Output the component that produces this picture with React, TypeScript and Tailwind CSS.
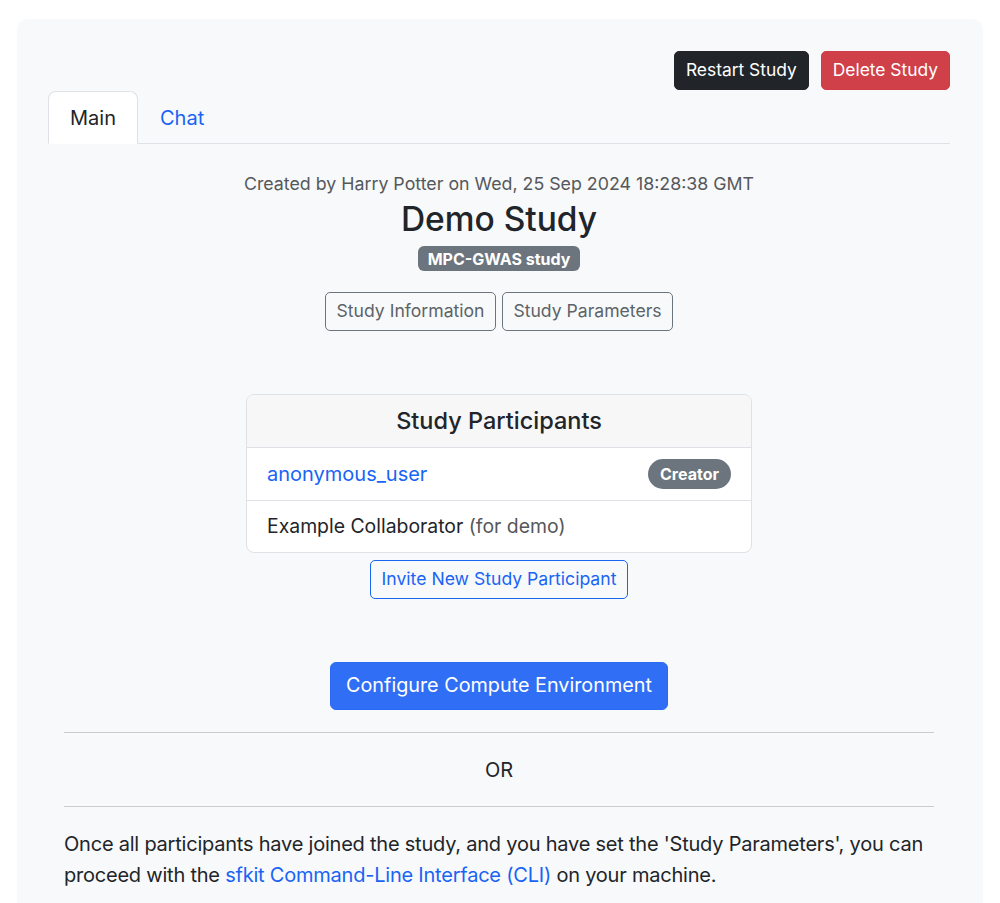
import React from "react";

export default function App() {
  return (
    <div className="min-h-[903px] bg-white pt-[19px] px-[17px] text-[#212529]" style={{ fontFamily: "Inter, 'Noto Sans', sans-serif" }}>
      <div className="rounded-[10px] bg-[#f8f9fa] pl-[31px] pr-[33px] pt-[32px] pb-[40px]">
        <div className="flex justify-end gap-[12px]">
          <button className="h-[39px] rounded-[5px] border border-[#212529] bg-[#212529] px-[11px] text-[17.4px] text-white">Restart Study</button>
          <button className="h-[39px] rounded-[5px] border border-[#cf3e48] bg-[#cf4049] px-[11px] text-[17.4px] text-white">Delete Study</button>
        </div>
        <div className="mt-[1px] flex h-[53px] border-b border-[#dee2e6]">
          <div className="-mb-px flex h-[53px] items-center rounded-t-[8px] border border-b-white border-[#dee2e6] bg-white px-[21px] text-[20px]">Main</div>
          <div className="flex h-[53px] items-center px-[22px] text-[20px] text-[#1864f5]">Chat</div>
        </div>

        <div className="flex flex-col items-center">
          <div className="mt-[26px] text-[17.8px] leading-[27px] text-[#55585b]">Created by Harry Potter on Wed, 25 Sep 2024 18:28:38 GMT</div>
          <div className="mt-px text-[33.5px] leading-[42px] font-medium">Demo Study</div>
          <span className="mt-[6px] flex h-[25px] items-center rounded-[6px] bg-[#6c757d] px-[10px] text-[16px] font-bold text-white">MPC-GWAS study</span>
          <div className="mt-[21px] flex gap-[6px]">
            <button className="h-[39px] w-[171px] rounded-[5px] border border-[#6c757d] text-[17.6px] text-[#5c6369]">Study Information</button>
            <button className="h-[39px] w-[171px] rounded-[5px] border border-[#6c757d] text-[17.6px] text-[#5c6369]">Study Parameters</button>
          </div>

          <div className="mt-[63px] w-[506px] overflow-hidden rounded-[8px] border border-[#dee2e6] bg-white">
            <div className="flex h-[53px] items-center justify-center border-b border-[#dee2e6] bg-[#f7f7f8] text-[23.5px] font-medium">Study Participants</div>
            <div className="flex h-[53px] items-center justify-between border-b border-[#dee2e6] px-[20px]">
              <span className="text-[20px] text-[#1864f5]">anonymous_user</span>
              <span className="flex h-[30px] items-center rounded-full bg-[#6c757d] px-[12px] text-[16px] font-bold text-white">Creator</span>
            </div>
            <div className="flex h-[51px] items-center px-[20px] text-[19.4px]">
              Example Collaborator&nbsp;<span className="text-[#55585b]">(for demo)</span>
            </div>
          </div>

          <button className="mt-[7px] h-[39px] rounded-[5px] border border-[#1864f5] px-[11px] text-[17.6px] text-[#1864f5]">Invite New Study Participant</button>

          <button className="mt-[63px] h-[48px] rounded-[6px] border border-[#2a6bf5] bg-[#306ff5] px-[15px] text-[19.8px] text-white">Configure Compute Environment</button>
        </div>

        <div className="px-[16px]">
          <hr className="mt-[22px] border-t-[1.5px] border-[#cbccce]" />
          <div className="mt-[22px] text-center text-[20px] leading-[30px]">OR</div>
          <hr className="mt-[21px] border-t-[1.5px] border-[#cbccce]" />
          <p className="mt-[22px] text-[20px] leading-[31px] tracking-[-0.22px]">
            Once all participants have joined the study, and you have set the 'Study Parameters', you can proceed with the{" "}
            <a className="text-[#1864f5]">sfkit Command-Line Interface (CLI)</a> on your machine.
          </p>
        </div>
      </div>
    </div>
  );
}
